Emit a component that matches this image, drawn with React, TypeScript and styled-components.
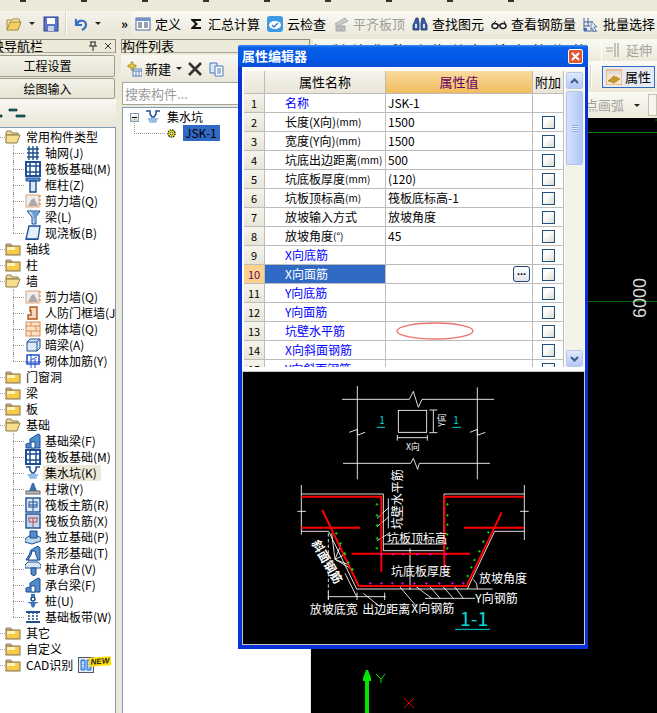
import React from 'react';
import styled, { createGlobalStyle } from 'styled-components';

const Global = createGlobalStyle`
  html, body { margin: 0; padding: 0; background: #fff; }
  * { box-sizing: border-box; }
`;
const FONT = `"Noto Sans CJK SC", "Liberation Sans", sans-serif`;

const Page = styled.div`
  position: relative; width: 657px; height: 713px; overflow: hidden;
  display: flex; flex-direction: column; background: #ece9d8;
  font: 12px/16px ${FONT}; color: #000;
`;
const MenuStrip = styled.div`
  height: 11px; background: #ece9d8; display: flex; gap: 55px; padding-left: 20px;
  i { width: 6px; height: 2px; background: #333; }
`;
const TopBar = styled.div`
  height: 25px; display: flex; font-size: 13px;
  background: linear-gradient(#f3f2ea, #e9e6d6);
`;
const QuickBar = styled.div`
  width: 131px; display: flex; align-items: center; padding-left: 6px; flex: none;
`;
const Slot = styled.span<{ $ml?: number }>`
  display: inline-flex; align-items: center; margin-left: ${p => p.$ml ?? 0}px;
`;
const Caret = styled.span`
  width: 0; height: 0; border: 3px solid transparent; border-top: 3px solid #222; border-bottom: 0;
`;
const VSep = styled.span`
  width: 2px; height: 23px; background: #d8d5c4; border-right: 1px solid #fff;
`;
const MainBar = styled.div`
  flex: 1; display: flex; align-items: center; gap: 7px; padding-left: 4px; white-space: nowrap;
  background: linear-gradient(#fafaf5, #ece9da); border-radius: 3px 0 0 3px;
`;
const ToolItem = styled.span<{ $off?: boolean }>`
  display: inline-flex; align-items: center; gap: 4px; color: ${p => (p.$off ? '#9c9c96' : '#000')};
`;
const Main = styled.div`
  flex: 1; display: flex; min-height: 0;
`;
const NavCol = styled.div`
  width: 116px; flex: none; padding-top: 3px; display: flex; flex-direction: column; overflow: hidden;
`;
const ListCol = styled.div`
  width: 189px; margin-left: 5px; flex: none; padding-top: 3px; display: flex; flex-direction: column; overflow: hidden;
`;
const PanelHead = styled.div`
  height: 14px; flex: none; border: 1px solid #8f8d80; border-bottom-color: #aaa89a; display: flex; align-items: center;
  font-size: 13px; line-height: 12px; white-space: nowrap; background: #ece9d8;
`;
const HeadText = styled.span<{ $ml: number }>`
  margin-left: ${p => p.$ml}px; flex: 1;
`;
const HeadGlyph = styled.span`
  display: inline-flex; margin-right: 3px;
`;
const NavButton = styled.div<{ $h: number; $mt: number }>`
  height: ${p => p.$h}px; margin: ${p => p.$mt}px 1px 0 -20px; flex: none; display: flex; align-items: center; justify-content: center;
  background: linear-gradient(#f4f3ea, #e6e3d3); border: 1px solid #9d9b8d; border-radius: 2px; font-size: 12px;
`;
const SmallBar = styled.div`
  height: 28px; flex: none; display: flex; align-items: center; background: linear-gradient(#f9f8f3, #e9e6d8);
`;
const NavTree = styled.div`
  flex: 1; background: #fff; border-top: 1px solid #7f9db9; border-right: 1px solid #7f9db9; padding-top: 1px; overflow: hidden;
`;
const Row = styled.div<{ $child?: boolean; $last?: boolean }>`
  position: relative; height: 16px; display: flex; align-items: center; white-space: nowrap;
  padding-left: ${p => (p.$child ? 25 : 5)}px; gap: ${p => (p.$child ? 4 : 5)}px;
  &::before {
    content: ''; position: absolute; top: 8px;
    left: ${p => (p.$child ? 13 : 0)}px; width: ${p => (p.$child ? 11 : 5)}px; border-top: 1px dotted #9a9a90;
  }
  &::after {
    content: ''; position: absolute; top: 0; left: 13px; height: ${p => (p.$last ? 8 : 16)}px;
    border-left: ${p => (p.$child ? '1px dotted #9a9a90' : '0')};
  }
`;
const Label = styled.span<{ $hl?: boolean }>`
  height: 16px; line-height: 16px; background: ${p => (p.$hl ? '#ece9d8' : 'transparent')};
  ${p => (p.$hl ? 'padding-right: 4px; margin-left: -2px; padding-left: 2px;' : '')}
`;
const NewBadge = styled.span`
  position: absolute; left: 89px; top: 0; width: 22px; height: 9px; background: #ffe000;
  font: italic bold 8px/9px "Liberation Sans", sans-serif; text-align: center; color: #222; transform: rotate(-4deg);
`;
const ListTools = styled.div`
  height: 27px; margin-top: 2px; flex: none; display: flex; align-items: center; padding-left: 5px;
  background: linear-gradient(#f9f8f3, #e9e6d8); font-size: 13px;
`;
const SearchBox = styled.div`
  height: 23px; flex: none; margin-left: 1px; background: #fff; border: 1px solid #a7a596; display: flex; align-items: center;
  padding-left: 2px; font-size: 13px; color: #9a9a9a;
`;
const ListTree = styled.div`
  flex: 1; margin-top: 2px; margin-left: 1px; background: #fff; border-top: 1px solid #7f9db9; border-left: 1px solid #7f9db9; padding-top: 1px;
`;
const ListRow = styled.div<{ $child?: boolean }>`
  position: relative; height: 16px; display: flex; align-items: center; white-space: nowrap;
  padding-left: ${p => (p.$child ? 42 : 7)}px; gap: ${p => (p.$child ? 5 : 6)}px;
  ${p => p.$child ? `&::before { content: ''; position: absolute; left: 11px; top: -6px; height: 14px; width: 30px;
    border-left: 1px dotted #9a9a90; border-bottom: 1px dotted #9a9a90; }` : ''}
`;
const Minus = styled.span`
  width: 9px; height: 9px; border: 1px solid #7f9db9; background: linear-gradient(#fff, #d8d5c8); position: relative; margin-right: 0;
  &::after { content: ''; position: absolute; left: 1px; right: 1px; top: 3px; height: 1px; background: #000; }
`;
const Selected = styled.span`
  background: #316ac5; width: 37px; height: 16px; line-height: 16px; padding-left: 2px; color: #000;
`;
const WorkCol = styled.div`
  flex: 1; min-width: 0; display: flex; flex-direction: column; overflow: hidden;
`;
const WorkBar = styled.div<{ $h: number; $mt?: number }>`
  height: ${p => p.$h}px; margin-top: ${p => p.$mt ?? 0}px; flex: none; display: flex; align-items: center; justify-content: flex-end; white-space: nowrap;
  background: linear-gradient(#fafaf5, #ece9da); font-size: 13px; margin-left: 3px;
  color: #a3a39b; overflow: hidden; gap: 4px;
`;
const FaintWords = styled.span`
  color: #000; letter-spacing: 7px; margin-right: 5px;
`;
const StubBox = styled.span<{ $w: number }>`
  width: ${p => p.$w}px; height: 22px; background: #f6f5ee; border: 1px solid #c5c3b4; flex: none;
`;
const PropButton = styled.span`
  width: 53px; height: 22px; flex: none; display: inline-flex; align-items: center; gap: 3px; padding-left: 3px; margin-right: 2px;
  border: 1px solid #316ac5; background: #e7ebf1; color: #000;
`;
const Canvas = styled.div`
  flex: 1; background: #000; margin-left: 1px; border-left: 0; min-height: 0;
  svg { display: block; }
`;
const Dialog = styled.div`
  position: absolute; left: 238px; top: 45px; width: 350px; height: 604px; display: flex; flex-direction: column;
  background: #0831d9; border-radius: 3px 3px 0 0;
`;
const Title = styled.div`
  height: 22px; flex: none; display: flex; align-items: center; justify-content: space-between; padding: 0 5px 0 4px;
  background: linear-gradient(#3b8cf5 0, #0a5fe8 12%, #0058e6 60%, #0a4fd8 100%);
  color: #fff; font-size: 13px; font-weight: 700; border-radius: 3px 3px 0 0;
`;
const Close = styled.span`
  width: 15px; height: 15px; border: 1px solid #fff; border-radius: 2px; background: #dd5a34; display: flex; align-items: center; justify-content: center;
`;
const Body = styled.div`
  flex: 1; margin: 0 3px 4px 4px; background: #fff; display: flex; flex-direction: column; padding: 4px 1px 1px; min-height: 0;
`;
const TableWrap = styled.div`
  height: 296px; flex: none; margin-left: 1px; display: flex; overflow: hidden;
`;
const Grid = styled.div`
  width: 320px; flex: none; display: grid; grid-template-columns: 21px 121px 147px 31px; grid-auto-rows: 19px; grid-template-rows: 23px;
  align-content: start;
`;
const Cell = styled.div`
  position: relative; border-right: 1px solid #bcbcbc; border-bottom: 1px solid #bcbcbc; display: flex; align-items: center; white-space: nowrap; overflow: hidden;
`;
const Head = styled(Cell)<{ $hot?: boolean }>`
  justify-content: center; font-size: 13px; color: ${p => (p.$hot ? '#660066' : '#000')};
  background: ${p => (p.$hot ? 'linear-gradient(#f9da9e, #f1bd5f)' : 'linear-gradient(#f5f4ec, #e9e6d8)')};
`;
const NumCell = styled(Cell)<{ $on?: boolean }>`
  justify-content: center; font-size: 11px; color: ${p => (p.$on ? '#660066' : '#000')};
  background: ${p => (p.$on ? '#fdd28c' : 'linear-gradient(#f5f4ec, #e8e5d6)')};
`;
const NameCell = styled(Cell)<{ $blue?: boolean; $on?: boolean }>`
  padding-left: 20px; color: ${p => (p.$on ? '#fff' : p.$blue ? '#0000ff' : '#000')};
  background: ${p => (p.$on ? '#316ac5' : '#fff')};
`;
const Unit = styled.span`
  font-size: 10px;
`;
const ValueCell = styled(Cell)`
  padding-left: 2px; overflow: visible;
`;
const AddCell = styled(Cell)`
  justify-content: center; padding-left: 1px;
`;
const Check = styled.span`
  width: 13px; height: 13px; border: 1px solid #1c5180; background: linear-gradient(135deg, #f2f1ea, #fff 30%, #dcdcd4);
`;
const More = styled.span`
  position: absolute; right: 2px; top: 1px; width: 17px; height: 16px; border: 1px solid #23446b; border-radius: 3px;
  background: linear-gradient(#fff, #dfe4ec); font: bold 11px/9px "Liberation Sans", sans-serif; text-align: center; letter-spacing: 0; color: #000;
`;
const Ring = styled.svg`
  position: absolute; left: 9px; top: -1px;
`;
const Scroll = styled.div`
  flex: 1; margin-left: 1px; padding: 1px 1px 0; width: 20px; background: #f4f3ea; display: flex; flex-direction: column; justify-content: space-between;
`;
const ScrollTop = styled.div`
  display: flex; flex-direction: column; gap: 2px;
`;
const ScrollBtn = styled.div`
  height: 17px; flex: none; background: linear-gradient(#e1eafe, #b4c8f6); border: 1px solid #fff; border-radius: 2px; display: flex; align-items: center; justify-content: center; outline: 1px solid #b8c8e8; outline-offset: -1px;
`;
const Thumb = styled.div`
  height: 74px; background: linear-gradient(90deg, #d4e0fd, #c0d2f9 60%, #b2c6f5); border: 1px solid #b0c4ee; border-radius: 2px; display: flex; align-items: center; justify-content: center;
  i { display: block; width: 6px; height: 7px; background: repeating-linear-gradient(#8aa8e8 0 1px, #e9efff 1px 2px); }
`;
const Preview = styled.div`
  flex: 1; margin-top: 5px; background: #000; min-height: 0; outline: 1px solid #c8c8c0;
  svg { display: block; }
`;
const PreviewLabel = styled.text<{ $size?: number; $fill?: string; $bold?: boolean }>`
  font-family: ${FONT}; font-size: ${p => p.$size ?? 36}px; fill: ${p => p.$fill ?? '#fff'}; font-weight: ${p => (p.$bold ? 700 : 400)};
`;
const CanvasNumber = styled.text`
  font-family: "Liberation Sans", sans-serif; font-size: 18px; fill: #d8d8d8;
`;

const NAVY = '#1d4f92';
const icons: Record<string, React.ReactNode> = {
  open: <><path d="M1 4l1-2h4l1 2h6v2H1z" fill="#f5dc9a" stroke="#8a7a4c" /><path d="M1 14V6h11l3-0-3 8z" fill="#f9df8c" stroke="#8a7a4c" /></>,
  closed: <><path d="M1 5V3h5l1 2z" fill="#f0e2b0" stroke="#8a7f5c" /><rect x="1" y="5" width="14" height="9" fill="#f7c948" stroke="#7d7350" /><rect x="2" y="6" width="8" height="3" fill="#fff3bc" /></>,
  grid: <path d="M2 4h12M2 8h12M2 12h12M4 1v14M8 1v14M12 1v14" stroke={NAVY} fill="none" strokeWidth="1.4" />,
  raft: <><rect x="1" y="1" width="14" height="14" fill="#fff" stroke={NAVY} strokeWidth="2" /><path d="M1 5h14M1 11h14M5 1v14M11 1v14" stroke={NAVY} strokeWidth="1.5" /></>,
  column: <><path d="M1 1h14v3H1z" fill="#5f93cc" stroke={NAVY} /><path d="M5 4h6v11H5z" fill="#dbe7f5" stroke={NAVY} strokeWidth="1.4" /></>,
  shear: <><rect x="1" y="2" width="13" height="12" fill="#eee" stroke="#e0a070" /><path d="M3 13l3-6 3-2 4 8z" fill="#aaa" /><path d="M15 2v12" stroke="#d96a1c" strokeDasharray="2 2" /></>,
  beam: <><path d="M2 2h13l-4 6v7H7V8z" fill="#bcd4ec" stroke={NAVY} /><path d="M7 3l6 0-3 11z" fill="#6aa0d8" /></>,
  slab: <><path d="M4 1h11l-2 13H1z" fill="#e4eefa" stroke={NAVY} strokeWidth="1.3" /><path d="M1 14h12v1H1z" fill={NAVY} /></>,
  door: <path d="M5 2h7v12H3v-4h3V6H5z" fill="#f3d9c0" stroke="#b5541c" strokeWidth="1.4" />,
  brick: <><rect x="1" y="1" width="14" height="14" fill="#fbe3cc" stroke="#d98a50" /><path d="M1 5h14M1 10h14M6 1v4M11 5v5M6 10v5" stroke="#d98a50" /></>,
  dark: <><path d="M2 5l3-3h10v9l-3 3H2z" fill="#dbe7f5" stroke={NAVY} /><path d="M2 5h10v9M12 5l3-3" fill="none" stroke={NAVY} /></>,
  rebar: <><rect x="2" y="2" width="12" height="9" fill="none" stroke="#2050c8" strokeWidth="1.5" /><path d="M0 9h16M6 1v14M10 6v9M6 7l6-3" stroke="#2050c8" /></>,
  fbeam: <><path d="M1 15v-4l4-1V6l8-5 2 1v13z" fill="#4f8ccb" stroke={NAVY} /><path d="M6 15V9h4v6z" fill="#fff" stroke={NAVY} /></>,
  pit: <><path d="M1 2h4v3l2 3h2l2-3V2h4" fill="none" stroke={NAVY} strokeWidth="1.5" /><path d="M2 9h12l-3 5H5z" fill="#a8c8ec" /><path d="M4 10h8M5 12h6" stroke="#5d8fc8" strokeDasharray="1 1" /></>,
  pier: <><path d="M6 5l1-3h2l1 3 2 5H4z" fill="#3d6fae" /><rect x="1" y="10" width="14" height="3" fill="#bbb" stroke="#666" /></>,
  main: <><rect x="1" y="1" width="14" height="14" fill="#dbe7f5" stroke={NAVY} strokeWidth="1.4" /><path d="M8 2v12M4 8h8" stroke={NAVY} /><rect x="4" y="5" width="8" height="5" fill="none" stroke={NAVY} /></>,
  neg: <><rect x="1" y="1" width="14" height="14" fill="#c4d7ef" stroke={NAVY} strokeWidth="1.4" /><path d="M3 5h10M8 5v9M4 9h8M4 5l0 4M12 5v4" stroke="#b34a4a" /></>,
  iso: <><path d="M0 10l4-3h9l3 2v3l-9 3-7-2z" fill="#bcd4ec" stroke={NAVY} /><path d="M5 2h7v7H5z" fill="#4f8ccb" stroke={NAVY} /></>,
  strip: <><path d="M1 15l3-5 2-5 7-4 2 2v12z" fill="#5b94cf" stroke={NAVY} /><path d="M3 15l3-5 1-4h3l1 4 2 5z" fill="#fff" stroke={NAVY} /></>,
  cap: <><path d="M0 4l3-3h10l3 3v3H0z" fill="#dbe7f5" stroke={NAVY} /><path d="M6 7h5v6l-2 2-3-2z" fill="#4f8ccb" stroke={NAVY} /></>,
  pile: <><circle cx="8" cy="6" r="2" fill="#fff" stroke={NAVY} strokeWidth="1.5" /><path d="M6 1h4v3H6zM2 9h12l-4 2v2l-2 2-2-2v-2z" fill="#3d76b8" /></>,
  band: <><path d="M1 3h14M1 13h14" stroke={NAVY} strokeWidth="2" /><path d="M4 3v10M8 3v10M12 3v10" stroke={NAVY} strokeWidth="1.5" strokeDasharray="2 1" /></>,
  cad: <><rect x=".5" y=".5" width="15" height="15" fill="#e8eef8" stroke="#505a66" /><path d="M3 3h4v10H3zM9 3h4v10H9z" fill="#8fb8ec" stroke="#2070d0" /><path d="M4 6h2M4 9h2M10 6h2M10 9h2" stroke="#fff" /></>,
  gear: <><circle cx="8" cy="8" r="4.4" fill="#fff200" stroke="#222" strokeWidth="1.6" strokeDasharray="2 1" /><circle cx="8" cy="8" r="1.8" fill="#fff" stroke="#333" /></>,
  folderTop: <><path d="M1 14V4h5l1-1h6l1 3" fill="#f8e7a8" stroke="#a08a40" /><path d="M1 14l3-8h11l-3 8z" fill="#f5cf66" stroke="#a08a40" /></>,
  save: <><rect x="1" y="1" width="14" height="14" fill="#5c74c6" stroke="#2b3e8c" /><rect x="4" y="2" width="8" height="6" fill="#fff" /><rect x="5" y="10" width="6" height="5" fill="#c8d0e8" /></>,
  undo: <path d="M3 3v6h6M4 8c2-5 9-4 9 1 0 3-2 4-4 5" fill="none" stroke="#3a6fc8" strokeWidth="2.2" />,
  define: <><rect x="1" y="2" width="14" height="12" fill="#fff" stroke="#4a6a9c" /><rect x="1" y="2" width="14" height="3" fill="#6f94c8" /><path d="M3 7h4M3 9h4M3 11h4M9 7h4M9 9h4M9 11h4" stroke="#33415c" /></>,
  sigma: <path d="M3 3h10v2H7l3 3-3 3h6v2H3v-1l4-4-4-4z" fill="#111" />,
  cloud: <><rect x="0" y="0" width="16" height="16" rx="3" fill="#3f9ae6" /><ellipse cx="8" cy="9" rx="6" ry="4" fill="#fff" /><path d="M5 9l2 2 4-4" stroke="#3a78c0" fill="none" strokeWidth="1.4" /></>,
  align: <><path d="M2 8l10-6 3 3-10 5z" fill="#ccc" stroke="#aaa" /><rect x="3" y="10" width="9" height="5" fill="#bbb" stroke="#aaa" /></>,
  find: <><path d="M2 7l2-5h2l1 5v7H1V9zM14 7l-2-5h-2L9 7v7h6V9z" fill="#3a5fa8" stroke="#1d3366" strokeWidth=".8" /><rect x="3" y="8" width="2" height="4" fill="#cfe0f8" /><rect x="11" y="8" width="2" height="4" fill="#cfe0f8" /></>,
  glasses: <><ellipse cx="4" cy="10" rx="3" ry="2.4" fill="#fff" stroke="#222" strokeWidth="1.5" /><ellipse cx="12" cy="10" rx="3" ry="2.4" fill="#fff" stroke="#222" strokeWidth="1.5" /><path d="M7 9h2M2 8l3-3M14 8l-1-3" stroke="#222" /></>,
  batch: <><path d="M1 2v13h13M1 6h9M1 10h6M5 2v8" stroke="#3e5e98" fill="none" /><rect x="1" y="12" width="3" height="3" fill="#3a6fc8" /><path d="M8 5l6 6-3 0 2 4-2 1-2-4-1 2z" fill="#dce8f8" stroke="#3e5e98" strokeWidth=".7" /></>,
  newItem: <><path d="M5 1h2v3h3v2H7v3H5V6H2V4h3z" fill="#f6d23c" stroke="#8c7a20" strokeWidth=".7" /><rect x="7" y="8" width="9" height="7" fill="#fff" stroke="#5078b0" /><path d="M7 10h9M10 10v5M13 10v5" stroke="#5078b0" /></>,
  del: <path d="M2 2l12 12M14 2L2 14" stroke="#333" strokeWidth="2.6" />,
  copy: <><path d="M1 2h7v10H1z" fill="#dce8f8" stroke="#4a78b8" /><path d="M6 5h8v10H6z" fill="#fff" stroke="#4a78b8" /><path d="M8 8h4M8 10h4M8 12h4" stroke="#4a78b8" /></>,
  prop: <><rect x="0" y="1" width="16" height="15" fill="#fbe3cc" stroke="#e09040" /><rect x="1" y="2" width="14" height="3" fill="#ddd" /><path d="M2 12l6-5 6 3-6 4z" fill="#c89a20" stroke="#333" strokeWidth=".6" strokeDasharray="1 1" /></>,
  stretch: <path d="M0 6h7M0 9h7M9 1v14M12 1v14" stroke="#a3a39b" fill="none" strokeWidth="1.2" />,
};

const Icon = ({ name, w = 16 }: { name: string; w?: number }) => (
  <svg width={w} height={w} viewBox="0 0 16 16" style={{ flex: 'none', display: 'block' }}>{icons[name]}</svg>
);

type Node = { t: string; kids?: [string, string][] };
const tree: Node[] = [
  { t: '常用构件类型', kids: [['轴网(J)', 'grid'], ['筏板基础(M)', 'raft'], ['框柱(Z)', 'column'], ['剪力墙(Q)', 'shear'], ['梁(L)', 'beam'], ['现浇板(B)', 'slab']] },
  { t: '轴线' }, { t: '柱' },
  { t: '墙', kids: [['剪力墙(Q)', 'shear'], ['人防门框墙(J)', 'door'], ['砌体墙(Q)', 'brick'], ['暗梁(A)', 'dark'], ['砌体加筋(Y)', 'rebar']] },
  { t: '门窗洞' }, { t: '梁' }, { t: '板' },
  { t: '基础', kids: [['基础梁(F)', 'fbeam'], ['筏板基础(M)', 'raft'], ['集水坑(K)', 'pit'], ['柱墩(Y)', 'pier'], ['筏板主筋(R)', 'main'], ['筏板负筋(X)', 'neg'], ['独立基础(P)', 'iso'], ['条形基础(T)', 'strip'], ['桩承台(V)', 'cap'], ['承台梁(F)', 'fbeam'], ['桩(U)', 'pile'], ['基础板带(W)', 'band']] },
  { t: '其它' }, { t: '自定义' },
];

const rows: [string, string, string, boolean][] = [
  ['名称', '', 'JSK-1', true], ['长度(X向)', '(mm)', '1500', false], ['宽度(Y向)', '(mm)', '1500', false],
  ['坑底出边距离', '(mm)', '500', false], ['坑底板厚度', '(mm)', '(120)', false], ['坑板顶标高', '(m)', '筏板底标高-1', false],
  ['放坡输入方式', '', '放坡角度', false], ['放坡角度', '(°)', '45', false], ['X向底筋', '', '', true], ['X向面筋', '', '', true],
  ['Y向底筋', '', '', true], ['Y向面筋', '', '', true], ['坑壁水平筋', '', '', true], ['X向斜面钢筋', '', '', true], ['Y向斜面钢筋', '', '', true],
];

const plus = (x: number, y: number, c: string) => <path key={`${x}-${y}`} d={`M${x - 4} ${y}h8M${x} ${y - 4}v8`} stroke={c} strokeWidth="2.4" fill="none" />;
const greens: [number, number][] = [[411, 403], [411, 436], [411, 466], [411, 505], [411, 535], [622, 403], [622, 436], [622, 464], [622, 493], [622, 535], [289, 490], [301, 520], [313, 550], [325, 578], [337, 598], [745, 487], [730, 515], [718, 544], [704, 570], [694, 592], [683, 618]];
const pinks: [number, number][] = [[424, 553], [460, 553], [490, 553], [532, 553], [571, 553], [618, 553], [391, 640], [424, 640], [457, 640], [488, 640], [523, 640], [559, 640], [598, 640], [637, 640], [670, 640]];

const SectionDrawing = () => (
  <svg width="341" height="272" viewBox="9 6 1023 816">
    <g stroke="#fff" strokeWidth="2.6" fill="none">
      <path d="M306 88H508L520 64L535 112L546 88H762M309 280H512L520 265L533 298L538 280H750" />
      <path d="M352 48V328M712 52V328" />
      <path d="M328 187L352 178V196L375 187M690 187L712 178V196L736 187" />
      <rect x="475" y="121" width="85" height="66" />
      <path d="M580 120V188M568 120H592M568 188H592M472 203H562M472 195V212M562 195V212" />
      <path d="M184 345V494M853 345V510M172 424H198M840 424H866" />
      <path d="M184 372H430V542H612V372H853M184 484H266L350 657H758M682 657L764 484H853" />
      <path d="M265 490V690" strokeDasharray="10 7" />
      <path d="M265 680H437M265 668V690M351 668V690M434 668V690" />
      <path d="M475 645L530 710M522 645L575 685M555 685H705M565 645L600 685M605 645L640 685M640 645L670 685" />
      <path d="M510 535V660M430 522H620M445 385V475M447 412L411 445M447 440L411 470M447 490L411 512" />
      <path d="M285 568L275 490M285 568L302 525M285 568L318 552M285 568L328 585M285 568L340 600M315 610L350 680" />
      <path d="M700 628Q714 640 712 657M370 670L420 710" />
    </g>
    <path d="M184 380H424V605M852 380H613V600M184 473H360M672 473H852M335 551H690M247 420L356 648H680L785 427" stroke="#ff0000" strokeWidth="6" fill="none" />
    {greens.map(([x, y]) => plus(x, y, '#00ff00'))}
    {pinks.map(([x, y]) => plus(x, y, '#ff00ff'))}
    <path d="M411 172H435M637 172H663M645 778H750" stroke="#00d8d8" strokeWidth="3" />
    <PreviewLabel x="418" y="162" $size={30} $fill="#00d8d8">1</PreviewLabel>
    <PreviewLabel x="640" y="162" $size={30} $fill="#00d8d8">1</PreviewLabel>
    <PreviewLabel x="498" y="240" $size={26}>X向</PreviewLabel>
    <PreviewLabel x="594" y="170" $size={26} transform="rotate(-90 594 170) translate(0 20)">Y向</PreviewLabel>
    <PreviewLabel x="486" y="478" transform="rotate(-90 486 478)">坑壁水平筋</PreviewLabel>
    <PreviewLabel x="441" y="520">坑板顶标高</PreviewLabel>
    <PreviewLabel x="453" y="618">坑底板厚度</PreviewLabel>
    <PreviewLabel x="717" y="640">放坡角度</PreviewLabel>
    <PreviewLabel x="706" y="698">Y向钢筋</PreviewLabel>
    <PreviewLabel x="209" y="732">放坡底宽</PreviewLabel>
    <PreviewLabel x="367" y="732">出边距离</PreviewLabel>
    <PreviewLabel x="514" y="730">X向钢筋</PreviewLabel>
    <PreviewLabel x="214" y="519" $bold transform="rotate(60 214 519)">斜面钢筋</PreviewLabel>
    <PreviewLabel x="660" y="768" $size={58} $fill="#00d8d8">1-1</PreviewLabel>
  </svg>
);

const App = () => (
  <Page>
    <Global />
    <MenuStrip>{[0, 1, 2, 3, 4, 5, 6, 7, 8].map(n => <i key={n} />)}</MenuStrip>
    <TopBar>
      <QuickBar>
        <Icon name="folderTop" />
        <Slot $ml={7}><Caret /></Slot>
        <Slot $ml={8}><Icon name="save" /></Slot>
        <Slot $ml={6}><VSep /></Slot>
        <Slot $ml={6}><Icon name="undo" /></Slot>
        <Slot $ml={6}><Caret /></Slot>
        <Slot $ml={20}><b>»</b></Slot>
      </QuickBar>
      <MainBar>
        <ToolItem><Icon name="define" />定义</ToolItem>
        <ToolItem><Icon name="sigma" />汇总计算</ToolItem>
        <ToolItem><Icon name="cloud" />云检查</ToolItem>
        <ToolItem $off><Icon name="align" />平齐板顶</ToolItem>
        <ToolItem><Icon name="find" />查找图元</ToolItem>
        <ToolItem><Icon name="glasses" />查看钢筋量</ToolItem>
        <ToolItem><Icon name="batch" />批量选择</ToolItem>
      </MainBar>
    </TopBar>
    <Main>
      <NavCol>
        <PanelHead>
          <HeadText $ml={-23}>模块导航栏</HeadText>
          <HeadGlyph>
            <svg width="24" height="10" viewBox="0 0 24 10"><path d="M2 1h6M3 1v4M7 1v4M1 5h8M5 5v5" stroke="#222" fill="none" /><path d="M17 2l6 6M23 2l-6 6" stroke="#333" fill="none" /></svg>
          </HeadGlyph>
        </PanelHead>
        <NavButton $h={22} $mt={2}>工程设置</NavButton>
        <NavButton $h={21} $mt={1}>绘图输入</NavButton>
        <SmallBar>
          <svg width="26" height="12" viewBox="0 0 26 12"><path d="M9 2h8v2H9zM16 8h9v2h-9zM0 8h2v2H0z" fill="#077" stroke="#111" strokeWidth=".6" /></svg>
        </SmallBar>
        <NavTree>
          {tree.map(n => (
            <React.Fragment key={n.t}>
              <Row>
                <Icon name={n.kids ? 'open' : 'closed'} />
                <Label>{n.t}</Label>
              </Row>
              {n.kids?.map(([t, i], idx) => (
                <Row key={t + i} $child $last={idx === n.kids!.length - 1}>
                  <Icon name={i} />
                  <Label $hl={t.startsWith('集水坑')}>{t}</Label>
                </Row>
              ))}
            </React.Fragment>
          ))}
          <Row>
            <Icon name="closed" />
            <Label>CAD识别</Label>
            <Icon name="cad" />
            <NewBadge>NEW</NewBadge>
          </Row>
        </NavTree>
      </NavCol>
      <ListCol>
        <PanelHead><HeadText $ml={0}>构件列表</HeadText></PanelHead>
        <ListTools>
          <Icon name="newItem" />
          <Slot $ml={3}>新建</Slot>
          <Slot $ml={5}><Caret /></Slot>
          <Slot $ml={5}><Icon name="del" /></Slot>
          <Slot $ml={6}><Icon name="copy" /></Slot>
        </ListTools>
        <SearchBox>搜索构件...</SearchBox>
        <ListTree>
          <ListRow><Minus /><Icon name="pit" />集水坑</ListRow>
          <ListRow $child><Icon name="gear" w={13} /><Selected>JSK-1</Selected></ListRow>
        </ListTree>
      </ListCol>
      <WorkCol>
        <WorkBar $h={22} $mt={3}>
          <FaintWords>删除复制镜像移动旋转打断合并修剪</FaintWords>
          <VSep />
          <Icon name="stretch" />
          延伸
          <Slot $ml={1} />
        </WorkBar>
        <WorkBar $h={31}>
          <Caret />
          <Slot $ml={2}><VSep /></Slot>
          <Slot $ml={2} />
          <PropButton><Icon name="prop" /><span style={{ color: '#000' }}>属性</span></PropButton>
        </WorkBar>
        <WorkBar $h={26}>
          三点画弧
          <Slot $ml={6}><Caret /></Slot>
          <Slot $ml={4}><StubBox $w={9} /></Slot>
        </WorkBar>
        <Canvas>
          <svg width="346" height="595" viewBox="311 118 346 595">
            <path d="M311 132.5H657" stroke="#008000" />
            <path d="M311 301.5H657" stroke="#006a00" />
            <path d="M655 120h2" stroke="#008000" />
            <CanvasNumber x="646" y="318" transform="rotate(-90 646 318)">6000</CanvasNumber>
            <path d="M365 713V681H363V678L366 670H368L371 678V681H369V713Z" fill="#00e800" />
            <path d="M376 674L381 679L385 674M381 679V683" stroke="#00e800" fill="none" />
            <path d="M404 698L414 708M414 698L404 708" stroke="#e00000" />
          </svg>
        </Canvas>
      </WorkCol>
    </Main>
    <Dialog>
      <Title>
        属性编辑器
        <Close><svg width="9" height="9" viewBox="0 0 9 9"><path d="M1 1l7 7M8 1L1 8" stroke="#fff" strokeWidth="2" /></svg></Close>
      </Title>
      <Body>
        <TableWrap>
          <Grid>
            <Head />
            <Head>属性名称</Head>
            <Head $hot>属性值</Head>
            <Head>附加</Head>
            {rows.map(([name, unit, value, blue], i) => (
              <React.Fragment key={name}>
                <NumCell $on={i === 9}>{i + 1}</NumCell>
                <NameCell $blue={blue} $on={i === 9}>{name}{unit && <Unit>{unit}</Unit>}</NameCell>
                <ValueCell>
                  {value}
                  {i === 9 && <More>...</More>}
                  {i === 12 && (
                    <Ring width="80" height="20" viewBox="0 0 80 20"><ellipse cx="40" cy="10" rx="38" ry="8" fill="none" stroke="#ef7070" strokeWidth="1.3" /></Ring>
                  )}
                </ValueCell>
                <AddCell>{i > 0 && <Check />}</AddCell>
              </React.Fragment>
            ))}
          </Grid>
          <Scroll>
            <ScrollTop>
              <ScrollBtn><svg width="9" height="6" viewBox="0 0 9 6"><path d="M1 5l3.5-3.5L8 5" stroke="#3a5a8c" strokeWidth="2" fill="none" /></svg></ScrollBtn>
              <Thumb><i /></Thumb>
            </ScrollTop>
            <ScrollBtn><svg width="9" height="6" viewBox="0 0 9 6"><path d="M1 1l3.5 3.5L8 1" stroke="#3a5a8c" strokeWidth="2" fill="none" /></svg></ScrollBtn>
          </Scroll>
        </TableWrap>
        <Preview><SectionDrawing /></Preview>
      </Body>
    </Dialog>
  </Page>
);

export default App;
